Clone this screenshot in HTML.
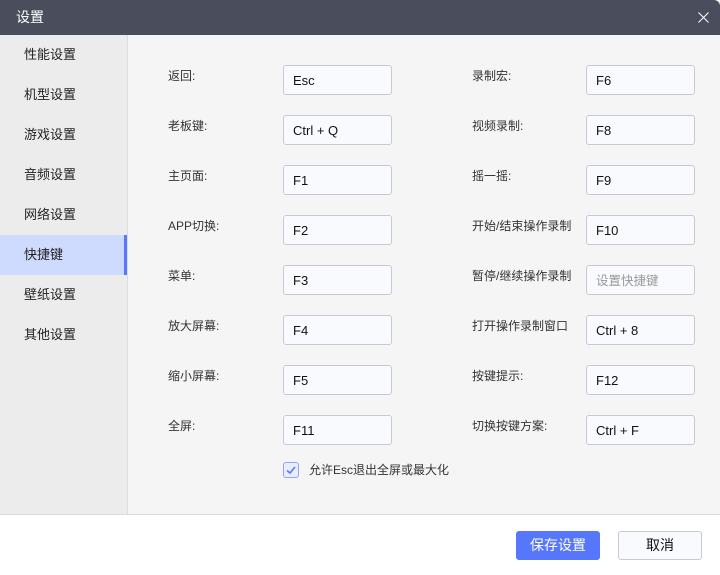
<!DOCTYPE html>
<html><head><meta charset="utf-8"><style>
*{margin:0;padding:0;box-sizing:border-box}
body{width:720px;height:575px;overflow:hidden;font-family:"Liberation Sans","Noto Sans CJK SC",sans-serif;font-size:13px;color:#222;background:#fff;position:relative}
.title{position:absolute;left:0;top:0;width:720px;height:35px;background:#4a4d5b;color:#fff;font-size:14px;line-height:35px;padding-left:16px;border-radius:0 6px 0 0}
.side{position:absolute;left:0;top:35px;width:128px;height:479px;background:#ececec;border-right:1px solid #dcdcdc}
.side div{height:40px;line-height:40px;padding-left:24px;font-size:13px}
.side .act{background:#cfdaff;border-right:3px solid #5a78ff}
.main{position:absolute;left:128px;top:35px;width:592px;height:479px;background:#f5f5f5}
.lbl{position:absolute;font-size:12px;color:#333;line-height:29px}
.inp{position:absolute;width:109px;height:30px;background:#f9fafe;border:1px solid #c9c9d6;border-radius:3px;padding-left:9px;line-height:30px;font-size:13px;color:#111}
.ph{color:#999;font-size:12.5px}
.foot{position:absolute;left:0;top:514px;width:720px;height:61px;background:#fff;border-top:1px solid #dcdcdc}
.btn{position:absolute;top:531px;height:29px;width:84px;border-radius:3px;text-align:center;line-height:27px;font-size:14px}
</style></head><body>
<div class="title">设置</div>
<svg style="position:absolute;left:698px;top:12px" width="11" height="11"><path d="M0.5 0.5L10.5 10.5M10.5 0.5L0.5 10.5" stroke="#fff" stroke-width="1"/></svg>
<div class="side">
<div>性能设置</div><div>机型设置</div><div>游戏设置</div><div>音频设置</div><div>网络设置</div><div class="act">快捷键</div><div>壁纸设置</div><div>其他设置</div>
</div>
<div class="main"></div>
<div class="lbl" style="left:168px;top:62px">返回:</div><div class="inp" style="left:283px;top:65px">Esc</div>
<div class="lbl" style="left:168px;top:112px">老板键:</div><div class="inp" style="left:283px;top:115px">Ctrl + Q</div>
<div class="lbl" style="left:168px;top:162px">主页面:</div><div class="inp" style="left:283px;top:165px">F1</div>
<div class="lbl" style="left:168px;top:212px">APP切换:</div><div class="inp" style="left:283px;top:215px">F2</div>
<div class="lbl" style="left:168px;top:262px">菜单:</div><div class="inp" style="left:283px;top:265px">F3</div>
<div class="lbl" style="left:168px;top:312px">放大屏幕:</div><div class="inp" style="left:283px;top:315px">F4</div>
<div class="lbl" style="left:168px;top:362px">缩小屏幕:</div><div class="inp" style="left:283px;top:365px">F5</div>
<div class="lbl" style="left:168px;top:412px">全屏:</div><div class="inp" style="left:283px;top:415px">F11</div>
<div class="lbl" style="left:472px;top:62px">录制宏:</div><div class="inp" style="left:586px;top:65px">F6</div>
<div class="lbl" style="left:472px;top:112px">视频录制:</div><div class="inp" style="left:586px;top:115px">F8</div>
<div class="lbl" style="left:472px;top:162px">摇一摇:</div><div class="inp" style="left:586px;top:165px">F9</div>
<div class="lbl" style="left:472px;top:212px">开始/结束操作录制</div><div class="inp" style="left:586px;top:215px">F10</div>
<div class="lbl" style="left:472px;top:262px">暂停/继续操作录制</div><div class="inp ph" style="left:586px;top:265px">设置快捷键</div>
<div class="lbl" style="left:472px;top:312px">打开操作录制窗口</div><div class="inp" style="left:586px;top:315px">Ctrl + 8</div>
<div class="lbl" style="left:472px;top:362px">按键提示:</div><div class="inp" style="left:586px;top:365px">F12</div>
<div class="lbl" style="left:472px;top:412px">切换按键方案:</div><div class="inp" style="left:586px;top:415px">Ctrl + F</div>
<div style="position:absolute;left:283px;top:462px;width:16px;height:16px;border:1px solid #8fa3ff;border-radius:3px;background:#e8edff"></div>
<svg style="position:absolute;left:283px;top:462px" width="16" height="16"><path d="M4 8.5L7 11L12 5" stroke="#5a78ff" stroke-width="1.6" fill="none"/></svg>
<div class="lbl" style="left:309px;top:456px">允许Esc退出全屏或最大化</div>
<div class="foot"></div>
<div class="btn" style="left:516px;background:#5677fc;color:#fff;border:1px solid #5677fc">保存设置</div>
<div class="btn" style="left:618px;background:#f9fafe;color:#111;border:1px solid #c9c9d6">取消</div>
</body></html>
